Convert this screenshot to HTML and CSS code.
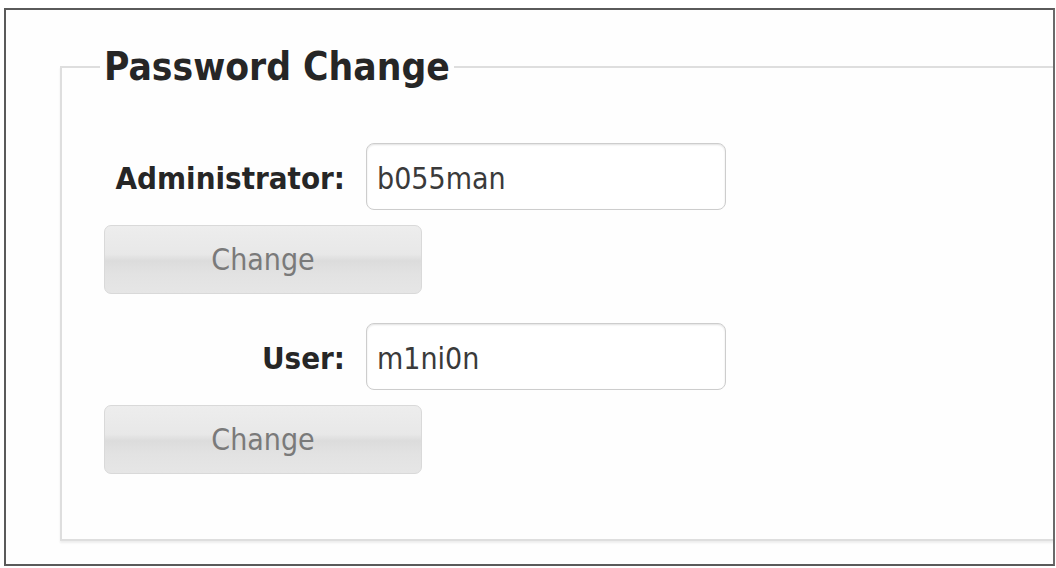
FILE: index.html
```html
<!DOCTYPE html>
<html>
<head>
<meta charset="utf-8">
<link rel="stylesheet" href="styles.css">
</head>
<body>
<div class="frame">
  <fieldset class="box">
    <legend class="title">Password Change</legend>
    <div class="row">
      <label class="label">Administrator:</label>
      <div class="input">b055man</div>
    </div>
    <div class="btn">Change</div>
    <div class="row row2">
      <label class="label">User:</label>
      <div class="input">m1ni0n</div>
    </div>
    <div class="btn">Change</div>
  </fieldset>
</div>
</body>
</html>
```
FILE: styles.css
```css
html, body { margin: 0; padding: 0; background: #fff; }
body {
  width: 1056px;
  height: 568px;
  overflow: hidden;
  font-family: "DejaVu Sans", Verdana, sans-serif;
  font-stretch: condensed;
}
.frame {
  margin: 8px 0 0 4px;
  width: 1051px;
  height: 558px;
  border: 2px solid #5a5a5a;
  border-right-color: #6a6a6a;
  background: #fefefe;
  box-sizing: border-box;
  overflow: hidden;
}
.box {
  margin: 34px 0 0 54px;
  width: 1020px;
  box-sizing: border-box;
  border: 2px solid #dedede;
  border-right: none;
  padding: 0 0 65px 0;
  box-shadow: 0 2px 2px rgba(0,0,0,0.07);
}
.title {
  font-weight: bold;
  font-size: 38.6px;
  color: #262626;
  padding: 0 4px;
  margin-left: 38px;
}
.row {
  display: grid;
  grid-template-columns: 283px 360px;
  column-gap: 21px;
  align-items: center;
}
.label {
  text-align: right;
  font-weight: bold;
  font-size: 31px;
  color: #262626;
  padding-top: 2px;
}
.input {
  height: 67px;
  box-sizing: border-box;
  border: 1px solid #cdcdcd;
  border-radius: 8px;
  box-shadow: inset 0 1px 2px rgba(0,0,0,0.12);
  display: flex;
  align-items: center;
  padding: 3px 0 0 10px;
  font-size: 30px;
  color: #3a3a3a;
  background: #fff;
}
.btn {
  width: 318px;
  height: 69px;
  margin: 15px 0 0 42px;
  box-sizing: border-box;
  border: 1px solid #d9d9d9;
  border-radius: 7px;
  background: linear-gradient(#ededed 0%, #e8e8e8 42%, #dcdcdc 52%, #e2e2e2 70%, #e6e6e6 100%);
  color: #7a7a7a;
  font-size: 30px;
  display: flex;
  align-items: center;
  justify-content: center;
}
.row:first-of-type { margin-top: 54px; }
.row2 { margin-top: 29px; }
```
